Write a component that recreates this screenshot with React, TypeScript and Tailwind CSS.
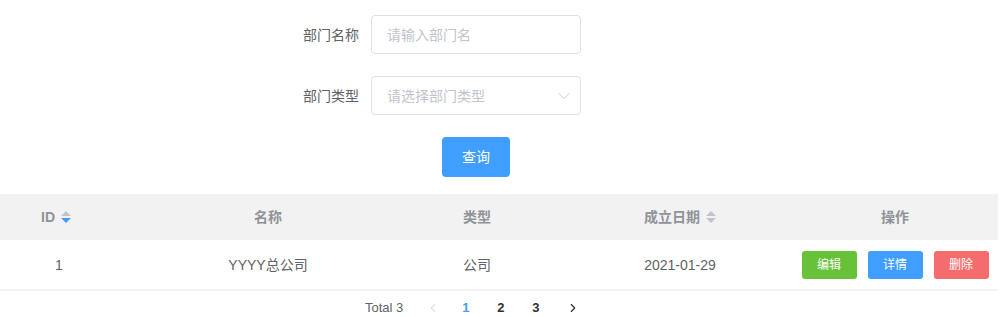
import { ChevronDown, ChevronLeft, ChevronRight } from "lucide-react";

const font = {
  fontFamily: '"Liberation Sans", "Noto Sans CJK SC", sans-serif',
};

const cols = "grid grid-cols-[118px_300px_118px_288px_142px_1fr]";

function SortCaret({ active }: { active?: "up" | "down" }) {
  return (
    <span className="ml-1.5 inline-flex flex-col items-center gap-[2px]">
      <span
        className={`h-0 w-0 border-x-[5px] border-b-[5px] border-x-transparent ${
          active === "up" ? "border-b-[#409eff]" : "border-b-[#c0c4cc]"
        }`}
      />
      <span
        className={`h-0 w-0 border-x-[5px] border-t-[5px] border-x-transparent ${
          active === "down" ? "border-t-[#409eff]" : "border-t-[#c0c4cc]"
        }`}
      />
    </span>
  );
}

function FormItem({ label, children }: { label: string; children: React.ReactNode }) {
  return (
    <div className="flex items-center">
      <label className="w-[100px] pr-3 text-right text-sm text-[#606266]">{label}</label>
      {children}
    </div>
  );
}

export default function App() {
  return (
    <div className="h-[317px] w-[1001px] overflow-hidden bg-white" style={font}>
      <div className="flex flex-col gap-[22px] pl-[271px] pt-[15px]">
        <FormItem label="部门名称">
          <div className="flex h-[39px] w-[210px] items-center rounded border border-[#dcdfe6] px-[15px] text-sm text-[#c0c4cc]">
            请输入部门名
          </div>
        </FormItem>
        <FormItem label="部门类型">
          <div className="flex h-[39px] w-[210px] items-center justify-between rounded border border-[#dcdfe6] pl-[15px] pr-[6px] text-sm text-[#c0c4cc]">
            请选择部门类型
            <ChevronDown size={20} strokeWidth={1} />
          </div>
        </FormItem>
        <div className="flex">
          <div className="w-[100px]" />
          <div className="flex w-[210px] justify-center">
            <button className="h-[40px] w-[68px] rounded bg-[#409eff] text-sm text-white">查询</button>
          </div>
        </div>
      </div>

      <div className="mt-[17px] w-[998px]">
        <div className={`${cols} h-[46px] items-center bg-[#f2f2f2] text-sm font-bold text-[#909399]`}>
          <div className="flex items-center justify-center pr-1.5">
            ID
            <SortCaret active="down" />
          </div>
          <div className="text-center">名称</div>
          <div className="text-center">类型</div>
          <div className="flex items-center justify-center">
            成立日期
            <SortCaret />
          </div>
          <div className="text-center">操作</div>
          <div />
        </div>
        <div className={`${cols} h-[51px] items-center border-b-2 border-[#f0f2f5] text-sm text-[#606266]`}>
          <div className="text-center">1</div>
          <div className="text-center">YYYY总公司</div>
          <div className="text-center">公司</div>
          <div className="text-center">2021-01-29</div>
          <div className="flex justify-center gap-[11px]">
            <button className="h-[28px] w-[55px] shrink-0 rounded-[3px] bg-[#67c23a] text-xs text-white">编辑</button>
            <button className="h-[28px] w-[55px] shrink-0 rounded-[3px] bg-[#409eff] text-xs text-white">详情</button>
            <button className="h-[28px] w-[55px] shrink-0 rounded-[3px] bg-[#f56c6c] text-xs text-white">删除</button>
          </div>
          <div />
        </div>
      </div>

      <div className="mt-[3px] flex h-[28px] items-center pl-[365px] text-[13px]">
        <span className="mr-[14px] text-[#606266]">Total 3</span>
        <span className="flex w-[31px] justify-center text-[#c0c4cc]">
          <ChevronLeft size={14} strokeWidth={1.5} />
        </span>
        <span className="w-[35px] text-center font-bold text-[#409eff]">1</span>
        <span className="w-[35px] text-center font-bold text-[#303133]">2</span>
        <span className="w-[35px] text-center font-bold text-[#303133]">3</span>
        <span className="flex w-[40px] justify-center text-[#303133]">
          <ChevronRight size={14} strokeWidth={2} />
        </span>
      </div>
    </div>
  );
}
